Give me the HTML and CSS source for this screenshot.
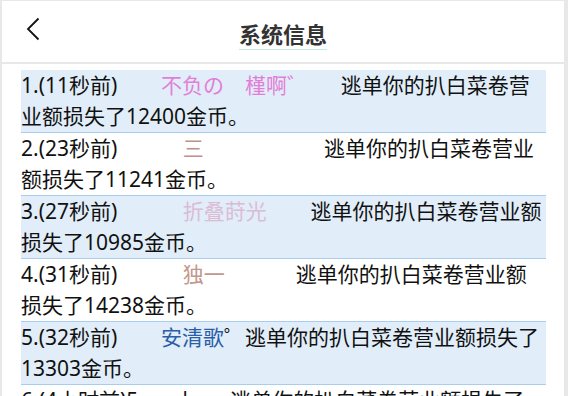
FILE: index.html
```html
<!DOCTYPE html>
<html>
<head>
    <meta charset="utf-8">
    <title>系统信息</title>
    <link rel="stylesheet" href="styles.css">
</head>
<body>
    <div class="page">
        <div class="header">
            <span class="back">
                <svg width="14" height="24" viewBox="0 0 14 24"><polyline points="12.5,1.5 2,12 12.5,22.5" fill="none" stroke="#111" stroke-width="1.8"/></svg>
            </span>
            <span class="title">系统信息</span>
        </div>
        <div class="list">
            <div class="item odd">1.(11秒前)        <span class="name c1">不负の　槿啊゛</span>      逃单你的扒白菜卷营业额损失了12400金币。</div>
            <div class="item">2.(23秒前)            <span class="name c2">三</span>                      逃单你的扒白菜卷营业额损失了11241金币。</div>
            <div class="item odd">3.(27秒前)            <span class="name c3">折叠莳光</span>        逃单你的扒白菜卷营业额损失了10985金币。</div>
            <div class="item">4.(31秒前)            <span class="name c4">独一</span>             逃单你的扒白菜卷营业额损失了14238金币。</div>
            <div class="item odd">5.(32秒前)        <span class="name c5">安清歌</span>゜逃单你的扒白菜卷营业额损失了13303金币。</div>
            <div class="item">6.(4小时前)5       卜      逃单你的扒白菜卷营业额损失了12876金币。</div>
        </div>
    </div>
</body>
</html>
```

FILE: styles.css
```css
body {
    margin: 0;
    background: #e8e8e8;
    font-family: "Noto Sans", "Noto Sans CJK SC", sans-serif;
    overflow: hidden;
}

.page {
    margin: 1px 4px 0 2px;
    background: #fff;
    height: 400px;
}

.header {
    height: 61px;
    border-bottom: 2px solid #e8e8e8;
    display: flex;
    align-items: center;
    justify-content: center;
    position: relative;
}

.back {
    position: absolute;
    left: 24px;
    top: 16px;
}

.title {
    font-size: 22px;
    font-weight: bold;
    color: #333;
    line-height: 28px;
    padding-bottom: 1px;
    border-bottom: 1px solid #c6e9e4;
    margin-top: 6px;
}

.list {
    padding: 6px 18px 0 19px;
}

.item {
    font-size: 21px;
    line-height: 31px;
    color: #111;
    white-space: pre-wrap;
    border-bottom: 1px solid #a9cdee;
}

.item.odd {
    background: #e1edf8;
}

.c1 { color: #e17fd8; }
.c2 { color: #c0908b; }
.c3 { color: #dbbcd5; }
.c4 { color: #c3968c; }
.c5 { color: #2b5ea8; }
```
